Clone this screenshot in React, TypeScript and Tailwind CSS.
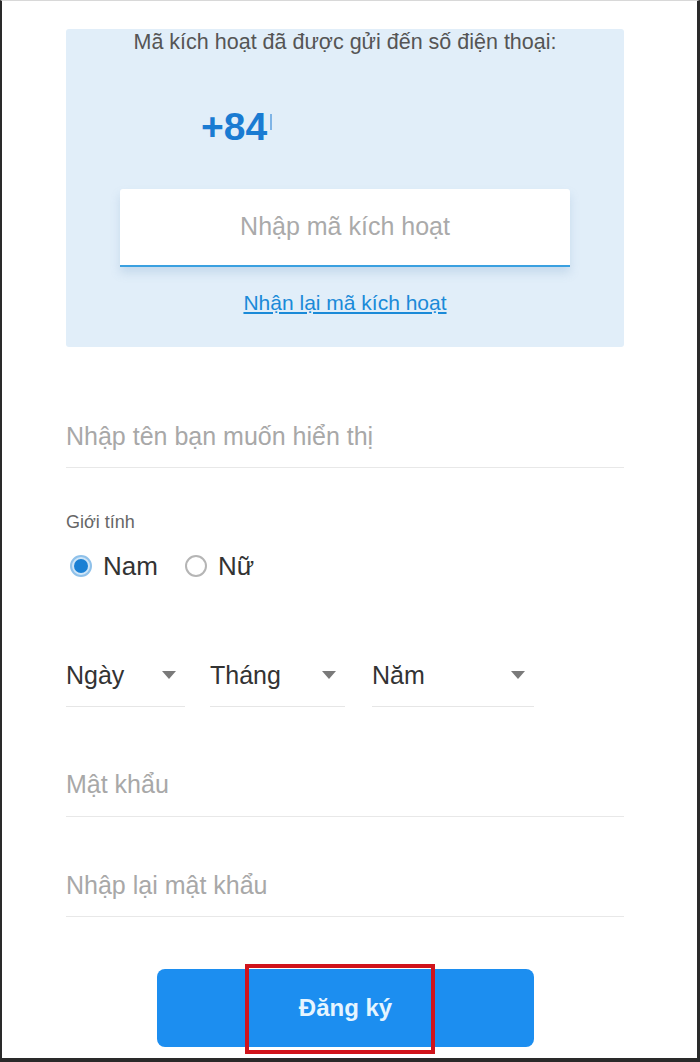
import React from 'react';

const font = { fontFamily: '"Liberation Sans", Arial, sans-serif' };

function Caret() {
  return (
    <svg width="14" height="8" viewBox="0 0 14 8" className="shrink-0">
      <path d="M0 0 L14 0 L7 8 Z" fill="#7a7a7a" />
    </svg>
  );
}

function Radio({ checked, label }: { checked?: boolean; label: string }) {
  return (
    <label className="flex items-center">
      {checked ? (
        <span className="flex h-[22px] w-[22px] items-center justify-center rounded-full border-2 border-[#8fc1ea] bg-[#cfe5f7]">
          <span className="h-[14px] w-[14px] rounded-full bg-[#1a80d4]" />
        </span>
      ) : (
        <span className="h-[22px] w-[22px] rounded-full border-2 border-[#b5b5b5] bg-white" />
      )}
      <span className="ml-[11px] text-[26px] leading-[28px] text-[#333]">{label}</span>
    </label>
  );
}

function Select({ label, width }: { label: string; width: string }) {
  return (
    <div className={`flex items-center justify-between border-b border-[#e6e6e6] pb-[17px] pr-[9px] ${width}`}>
      <span className="text-[25px] leading-[28px] text-[#333]">{label}</span>
      <Caret />
    </div>
  );
}

export default function App() {
  return (
    <div style={font} className="h-[1062px] w-[700px] border-b-[4px] border-l-[2px] border-r-[3px] border-t border-b-[#2a2a2a] border-l-[#2a2a2a] border-r-[#2a2a2a] border-t-[#d8d8d8] bg-white">
      <div className="flex flex-col pl-[64px] pr-[73px]">
        <div className="mt-[28px] flex h-[318px] flex-col items-center rounded-[3px] bg-[#e1eef9]">
          <p className="mt-[2px] text-[21.5px] leading-[22px] text-[#555]">Mã kích hoạt đã được gửi đến số điện thoại:</p>
          <div className="mt-[52px] ml-[135px] flex items-start self-start">
            <span className="text-[39px] font-bold leading-[44px] text-[#1a7bd2]">+84</span>
            <span className="ml-[3px] mt-[9px] h-[16px] w-[2px] bg-[#7fb4e6]" />
          </div>
          <div className="mt-[40px] flex h-[78px] w-[450px] items-center justify-center rounded-t-[3px] border-b-2 border-[#3aa0e0] bg-white shadow-[0_6px_10px_rgba(120,160,200,0.25)]">
            <span className="text-[25px] text-[#aaa]">Nhập mã kích hoạt</span>
          </div>
          <a className="mt-[24px] text-[21px] leading-[24px] text-[#1a8ad8] underline">Nhận lại mã kích hoạt</a>
        </div>

        <div className="mt-[75px] border-b border-[#e8e8e8] pb-[17px] text-[25px] leading-[28px] text-[#a8a8a8]">Nhập tên bạn muốn hiển thị</div>

        <div className="mt-[44px] text-[18px] leading-[20px] text-[#666]">Giới tính</div>
        <div className="mt-[20px] flex items-center gap-[27px] pl-[4px]">
          <Radio checked label="Nam" />
          <Radio label="Nữ" />
        </div>

        <div className="mt-[81px] flex">
          <Select label="Ngày" width="w-[119px]" />
          <div className="ml-[25px]">
            <Select label="Tháng" width="w-[135px]" />
          </div>
          <div className="ml-[27px]">
            <Select label="Năm" width="w-[162px]" />
          </div>
        </div>

        <div className="mt-[63px] border-b border-[#e8e8e8] pb-[18px] text-[25px] leading-[28px] text-[#a8a8a8]">Mật khẩu</div>
        <div className="mt-[54px] border-b border-[#e8e8e8] pb-[17px] text-[25px] leading-[28px] text-[#a8a8a8]">Nhập lại mật khẩu</div>

        <div className="relative ml-[91px] mt-[52px] w-[377px]">
          <button className="flex h-[78px] w-full items-center justify-center rounded-[8px] bg-[#1c8ef0] text-[24px] font-bold text-[#e6f5ff]">Đăng ký</button>
          <div className="pointer-events-none absolute left-[88px] top-[-5px] h-[90px] w-[190px] border-[4px] border-[#d0141c]" />
        </div>
      </div>
    </div>
  );
}
